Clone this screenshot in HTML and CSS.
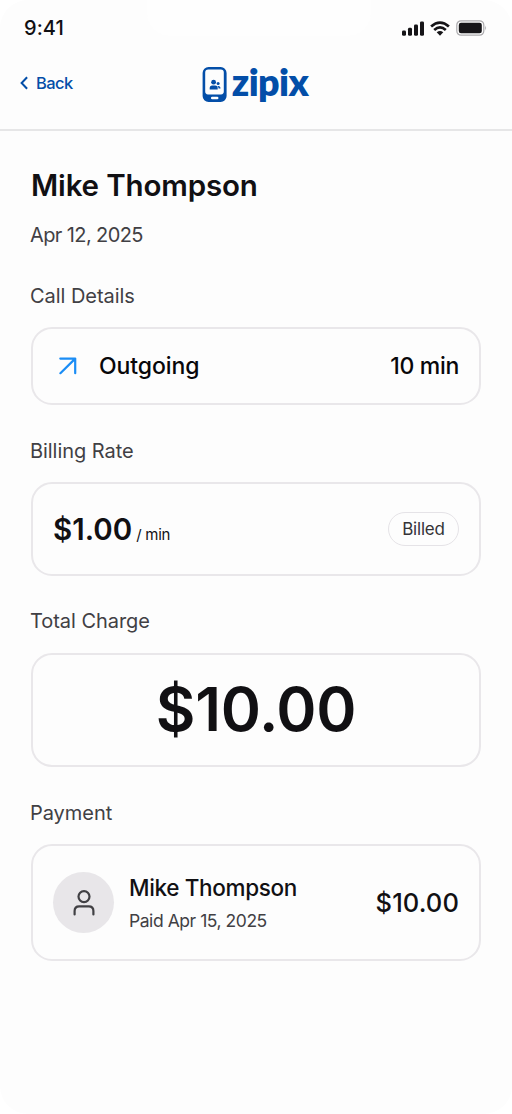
FILE: index.html
```html
<!DOCTYPE html>
<html lang="en">
<head>
<meta charset="utf-8">
<meta name="viewport" content="width=device-width, initial-scale=1">
<title>Call receipt</title>
<link rel="stylesheet" href="styles.css">
</head>
<body>
<div class="screen">
  <div class="notch"></div>
  <div class="status-bar">
    <span class="clock">9:41</span>
    <div class="status-icons">
      <svg width="22" height="15" viewBox="0 0 22 15" fill="#161518"><rect x="0" y="9.6" width="4" height="5.2" rx="1.4"/><rect x="6" y="6.8" width="4" height="8" rx="1.4"/><rect x="12" y="3.6" width="4" height="11.2" rx="1.4"/><rect x="18" y="0.4" width="4" height="14.4" rx="1.4"/></svg>
      <svg width="20" height="15" viewBox="0 0 20 15" fill="none" stroke="#161518" stroke-width="2.7"><path d="M1.1 5.4Q10-2.3 18.9 5.4"/><path d="M4.2 9Q10 3.8 15.8 9"/><path d="M6.7 11.2Q10 8.8 13.3 11.2L10 14.7Z" fill="#161518" stroke="none"/></svg>
      <svg width="31" height="16" viewBox="0 0 31 16"><rect x=".8" y=".8" width="27" height="14.4" rx="4.2" fill="none" stroke="#aaa9ac" stroke-width="1.2"/><rect x="2.8" y="2.8" width="23" height="10.4" rx="2.2" fill="#161518"/><path d="M29.200 5.600Q31 8 29.200 10.500Z" fill="#aaa9ac"/></svg>
    </div>
  </div>
  <header class="nav">
    <a class="back"><svg width="8" height="14" viewBox="0 0 8 14" fill="none" stroke="#034ea8" stroke-width="2"><path d="M7.1 1.2 1.6 7l5.500 5.800"/></svg><span>Back</span></a>
    <div class="logo">
      <svg width="26" height="36" viewBox="0 0 26 36"><path fill="#034ea8" fill-rule="evenodd" d="M6.500 0h12A6 6 0 0 1 24.600 6v23a6 6 0 0 1-6 6h-12a6 6 0 0 1-6-6V6a6 6 0 0 1 6-6ZM6.200 2.600A3 3 0 0 0 3.200 5.600v19a2.800 2.800 0 0 0 2.800 2.800h13a2.800 2.800 0 0 0 2.800-2.800v-19a3 3 0 0 0-3-3ZM10.200 29.700a1.200 1.200 0 0 0 0 2.500h5a1.200 1.200 0 0 0 0-2.500Z"/><g fill="#034ea8"><circle cx="11.600" cy="15.200" r="2.400"/><path d="M7.700 22.600v-1.500q0-2.500 2.500-2.500h3q2.500 0 2.500 2.500v1.500Z"/><circle cx="16.100" cy="16.500" r="1.500"/><path d="M15.300 18.900h1q2.200 0 2.200 2.700h-1.900q-.1-1.800-1.300-2.700Z"/></g></svg>
      <span class="wordmark">zipix</span>
    </div>
  </header>
  <main class="content">
    <h1 class="name">Mike Thompson</h1>
    <p class="date">Apr 12, 2025</p>
    <section>
      <h2 class="label">Call Details</h2>
      <div class="card call">
        <svg class="arrow" width="18" height="18" viewBox="0 0 18 18" fill="none" stroke="#1b8df5" stroke-width="2.2" stroke-linecap="round" stroke-linejoin="round"><path d="M1.300 1.600H16.200V16.200M16.200 1.600 1.400 16.200"/></svg>
        <span class="direction">Outgoing</span><span class="duration">10 min</span>
      </div>
    </section>
    <section>
      <h2 class="label">Billing Rate</h2>
      <div class="card rate"><span class="price">$1.00</span><span class="unit">/ min</span><span class="badge">Billed</span></div>
    </section>
    <section>
      <h2 class="label">Total Charge</h2>
      <div class="card total"><span>$10.00</span></div>
    </section>
    <section>
      <h2 class="label">Payment</h2>
      <div class="card payment">
        <div class="avatar"><svg width="22" height="28" viewBox="0 0 22 28" fill="none" stroke="#414044" stroke-width="2.200" stroke-linecap="round"><circle cx="11" cy="7.600" r="5.500"/><path d="M1.600 25.400v-3.500Q1.600 17.300 6.200 17.300h9.600q4.600 0 4.600 4.600v3.500"/></svg></div>
        <div class="payer"><span class="payer-name">Mike Thompson</span><span class="paid">Paid Apr 15, 2025</span></div>
        <span class="amount">$10.00</span>
      </div>
    </section>
  </main>
</div>
</body>
</html>
```

FILE: styles.css
```css
* { box-sizing: border-box; }
body { margin: 0; background: #fff; font-family: Inter, "Liberation Sans", sans-serif; color: #111013; }
h1, h2, p { margin: 0; }
svg { display: block; flex: none; }
span { white-space: nowrap; }
.screen { position: relative; width: 512px; height: 1114px; background: #fdfdfd; border-radius: 28px; overflow: hidden; }
.notch { position: absolute; left: 147px; top: 0; width: 224px; height: 36px; background: #fefefe; border-radius: 0 0 24px 24px; }
.status-bar { position: relative; height: 56px; padding: 0 25px 0 24px; display: flex; align-items: center; justify-content: space-between; }
.clock { font-size: 20px; font-weight: 500; letter-spacing: 0.1px; }
.status-icons { display: flex; align-items: center; gap: 6px; }
.nav { height: 75px; border-bottom: 2px solid #e6e6e7; padding: 0 20px; display: grid; grid-template-columns: 1fr auto 1fr; align-items: start; color: #034ea8; }
.back { display: flex; align-items: center; gap: 8px; height: 54px; font-size: 16.5px; font-weight: 500; letter-spacing: -0.6px; }
.logo { display: flex; align-items: center; gap: 4px; height: 58px; margin-right: 2px; }
.wordmark { font-family: Lato, sans-serif; font-size: 37.5px; font-weight: 800; line-height: 40px; margin-top: -6px; letter-spacing: -0.6px; }
.content { padding: 34px 31px 0 31px; display: flex; flex-direction: column; gap: 30px; }
.name { font-size: 29.5px; font-weight: 600; line-height: 40px; letter-spacing: -0.15px; }
.date { font-size: 20px; line-height: 30px; margin: -15px 0 1px -1px; letter-spacing: -0.6px; color: #414044; }
.label { font-size: 20px; font-weight: 400; line-height: 30px; margin: 0 0 16px -1px; letter-spacing: -0.05px; color: #414044; }
.card { border: 2px solid #e9e7ea; border-radius: 21px; display: flex; align-items: center; padding: 0 20px; }
.call { height: 78px; margin-bottom: 1px; font-size: 23px; font-weight: 500; color: #08070a; }
.arrow { margin-left: 6px; }
.direction { margin-left: 22px; letter-spacing: -0.1px; }
.duration { margin-left: auto; letter-spacing: -0.3px; }
.rate { height: 94px; }
.price { font-size: 29.5px; font-weight: 600; }
.unit { font-size: 15px; margin: 10px 0 0 4px; letter-spacing: -0.25px; }
.badge { margin-left: auto; width: 71px; height: 34px; border: 1px solid #e5e3e7; border-radius: 17px; display: flex; align-items: center; justify-content: center; font-size: 17px; letter-spacing: -0.2px; color: #343337; }
.total { height: 114px; margin: 17px 0 1px; padding-bottom: 2px; justify-content: center; font-size: 61px; font-weight: 600; letter-spacing: -0.3px; }
.payment { height: 117px; }
.avatar { width: 61px; height: 61px; border-radius: 50%; background: #e8e6e9; display: flex; align-items: center; justify-content: center; }
.payer { display: flex; flex-direction: column; gap: 4px; margin: 3px 0 0 15px; }
.payer-name { font-size: 22.5px; font-weight: 500; line-height: 30px; letter-spacing: -0.35px; }
.paid { font-size: 17.5px; line-height: 28px; letter-spacing: -0.45px; color: #414044; }
.amount { margin-left: auto; font-size: 25.5px; font-weight: 500; letter-spacing: 0.1px; }
```
